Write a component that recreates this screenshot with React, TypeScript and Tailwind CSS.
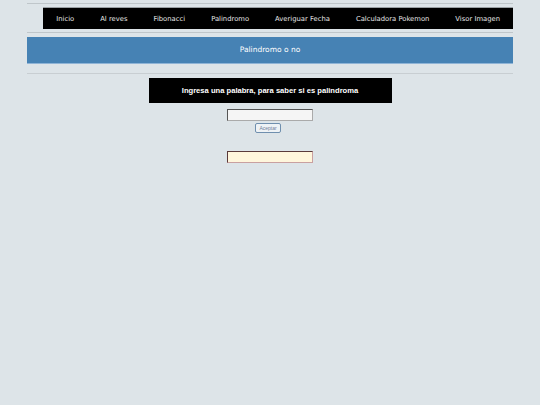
import React from "react";

const items = ["Inicio", "Al reves", "Fibonacci", "Palindromo", "Averiguar Fecha", "Calculadora Pokemon", "Visor Imagen"];

export default function App() {
  return (
    <div className="min-h-screen w-full bg-[#dde4e8]" style={{ fontFamily: '"DejaVu Sans", Verdana, sans-serif' }}>
      <div className="mx-auto w-[486px] pt-[3px]">
        <div className="h-[1px] bg-[#bfc6ca]" />
        <div className="mt-[3px] flex justify-end">
          <ul className="flex h-[22px] items-center border-t border-[#9aa0a4] bg-black pt-[1px]">
            {items.map((t) => (
              <li key={t} className="px-[13px] text-[6.8px] leading-none text-[#e6e6e6]">
                {t}
              </li>
            ))}
          </ul>
        </div>
        <div className="mt-[3px] h-[1px] bg-[#bfc6ca]" />
        <div className="mt-[4px] flex h-[27px] items-center justify-center border-b border-[#8fb4d6] bg-[#4682b4] text-[7.5px] text-white">
          Palindromo o no
        </div>
        <div className="mt-[9px] h-[1px] bg-[#c8ced2]" />
        <div className="mt-[4px] flex flex-col items-center">
          <div className="flex h-[25px] w-[243px] items-center justify-center bg-black text-[7.6px] font-bold text-white" style={{ fontFamily: '"Liberation Sans", Arial, sans-serif' }}>
            Ingresa una palabra, para saber si es palindroma
          </div>
          <input className="mt-[6px] box-border h-[12px] w-[86px] border border-[#555] border-r-[#aaa] border-b-[#aaa] bg-[#f5f5f5] outline-none" />
          <button className="ml-[-4px] mt-[2px] flex h-[10px] w-[26px] items-center justify-center rounded-[2px] border border-[#6f8fae] bg-[#eef2f5] text-[5px] leading-none text-[#6f8099]" style={{ fontFamily: '"Liberation Sans", Arial, sans-serif' }}>
            Aceptar
          </button>
          <input className="mt-[18px] box-border h-[12px] w-[86px] border border-[#5a3a3a] border-r-[#c9a0a0] border-b-[#c9a0a0] bg-[#fff6dc] outline-none" />
        </div>
      </div>
    </div>
  );
}
